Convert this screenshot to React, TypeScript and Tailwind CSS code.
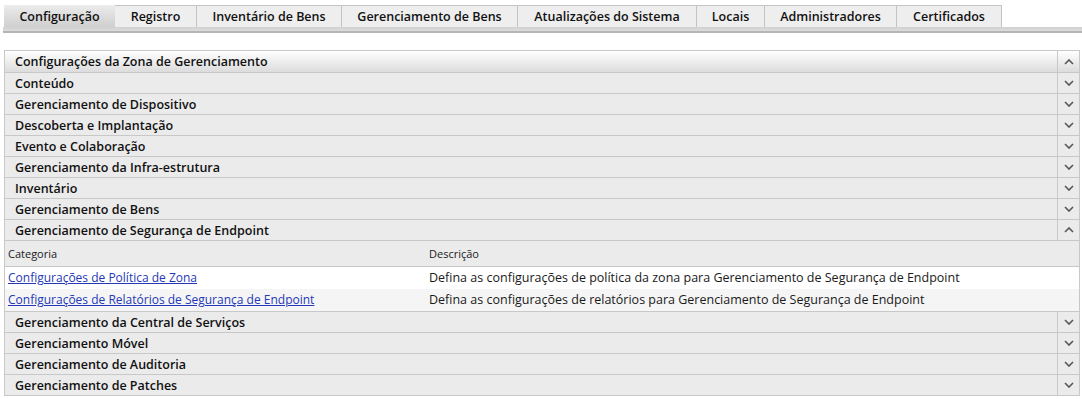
import React from "react";

const tabs = [
  { label: "Configuração", w: 111, active: true },
  { label: "Registro", w: 82 },
  { label: "Inventário de Bens", w: 145 },
  { label: "Gerenciamento de Bens", w: 176 },
  { label: "Atualizações do Sistema", w: 179 },
  { label: "Locais", w: 68 },
  { label: "Administradores", w: 132 },
  { label: "Certificados", w: 105 },
];

const before = [
  "Conteúdo",
  "Gerenciamento de Dispositivo",
  "Descoberta e Implantação",
  "Evento e Colaboração",
  "Gerenciamento da Infra-estrutura",
  "Inventário",
  "Gerenciamento de Bens",
];

const after = [
  "Gerenciamento da Central de Serviços",
  "Gerenciamento Móvel",
  "Gerenciamento de Auditoria",
  "Gerenciamento de Patches",
];

function Chevron({ up }: { up?: boolean }) {
  return (
    <svg width="10" height="6" viewBox="0 0 10 6" className="block">
      <path
        d={up ? "M1 5 L5 1 L9 5" : "M1 1 L5 5 L9 1"}
        fill="none"
        stroke="#555"
        strokeWidth="1.6"
      />
    </svg>
  );
}

function Row({ label, up, header }: { label: string; up?: boolean; header?: boolean }) {
  return (
    <div
      className={`flex border-b border-[#c8c8c8] ${
        header ? "bg-gradient-to-b from-[#ffffff] to-[#dcdcdc] h-[22px]" : "bg-[#ebebeb] h-[21px]"
      }`}
    >
      <div className="flex-1 flex items-center pl-[10px] pt-[2px] text-[12.5px] font-semibold text-[#111] leading-none">
        {label}
      </div>
      <div className="w-[22px] flex items-center justify-center border-l border-[#c8c8c8]">
        <Chevron up={up} />
      </div>
    </div>
  );
}

export default function App() {
  return (
    <div
      className="w-[1082px] h-[399px] bg-white overflow-hidden"
      style={{ fontFamily: '"Open Sans", "Noto Sans", sans-serif' }}
    >
      <div className="pt-[5px] pl-[4px]">
        <div className="flex h-[22px]">
          {tabs.map((t) => (
            <div
              key={t.label}
              style={{ width: t.w }}
              className={`flex items-center justify-center pt-[2px] text-[12.5px] font-semibold text-[#111] leading-none ${
                t.active
                  ? "bg-gradient-to-b from-[#ececec] to-[#cfcfcf]"
                  : "bg-[#eeeeee] border-t border-r border-[#c4c4c4]"
              }`}
            >
              {t.label}
            </div>
          ))}
        </div>
      </div>
      <div className="ml-[3px] h-[6px] bg-gradient-to-b from-[#d0d0d0] to-[#dcdcdc] border-b-2 border-[#b5b5b5]" />

      <div className="ml-[4px] mr-[2px] mt-[17px] border-l border-r border-t border-[#c8c8c8]">
        <Row label="Configurações da Zona de Gerenciamento" up header />
        {before.map((l) => (
          <Row key={l} label={l} />
        ))}
        <Row label="Gerenciamento de Segurança de Endpoint" up />
        <div className="bg-[#ebebeb] border-b border-[#c8c8c8]">
          <div className="flex h-[26px] items-center pt-[1px] text-[11px] text-[#1a1a1a] border-b border-[#c8c8c8]">
            <div className="w-[424px] pl-[3px]">Categoria</div>
            <div>Descrição</div>
          </div>
          <div className="flex h-[22px] items-center bg-white">
            <div className="w-[424px] pl-[3px] text-[12px]">
              <a href="#" className="text-[#2438b8] underline">
                Configurações de Política de Zona
              </a>
            </div>
            <div className="text-[#1a1a1a] text-[12.5px]">
              Defina as configurações de política da zona para Gerenciamento de Segurança de Endpoint
            </div>
          </div>
          <div className="flex h-[22px] items-center bg-[#f5f5f5]">
            <div className="w-[424px] pl-[3px] text-[12px]">
              <a href="#" className="text-[#2438b8] underline">
                Configurações de Relatórios de Segurança de Endpoint
              </a>
            </div>
            <div className="text-[#1a1a1a] text-[12.5px]">
              Defina as configurações de relatórios para Gerenciamento de Segurança de Endpoint
            </div>
          </div>
        </div>
        {after.map((l) => (
          <Row key={l} label={l} />
        ))}
      </div>
    </div>
  );
}
